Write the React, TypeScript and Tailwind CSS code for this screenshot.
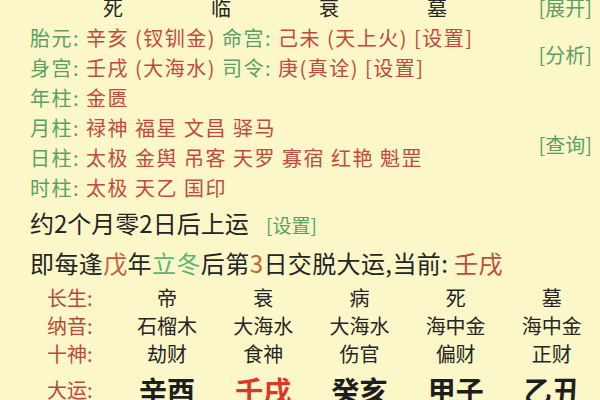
import React from 'react';

const G = 'text-[#5c9e66]';
const R = 'text-[#c04a3c]';

const infoLines: { label: string; parts: { t: string; c: string }[] }[] = [
  {
    label: '胎元:',
    parts: [
      { t: ' 辛亥 (钗钏金) ', c: R },
      { t: '命宫:', c: G },
      { t: ' 己未 (天上火) [设置]', c: R },
    ],
  },
  {
    label: '身宫:',
    parts: [
      { t: ' 壬戌 (大海水) ', c: R },
      { t: '司令:', c: G },
      { t: ' 庚(真诠) [设置]', c: R },
    ],
  },
  { label: '年柱:', parts: [{ t: ' 金匮', c: R }] },
  { label: '月柱:', parts: [{ t: ' 禄神 福星 文昌 驿马', c: R }] },
  { label: '日柱:', parts: [{ t: ' 太极 金舆 吊客 天罗 寡宿 红艳 魁罡', c: R }] },
  { label: '时柱:', parts: [{ t: ' 太极 天乙 国印', c: R }] },
];

const table = [
  { label: '长生:', values: ['帝', '衰', '病', '死', '墓'] },
  { label: '纳音:', values: ['石榴木', '大海水', '大海水', '海中金', '海中金'] },
  { label: '十神:', values: ['劫财', '食神', '伤官', '偏财', '正财'] },
];

const dayun = ['辛酉', '壬戌', '癸亥', '甲子', '乙丑'];

export default function App() {
  return (
    <div className="w-[600px] h-[400px] overflow-hidden bg-[#fbf7c8] font-['Noto_Sans_CJK_SC',sans-serif] text-[#252525]">
      {/* top part: pillars info + side links */}
      <div className="flex justify-between mt-[-7px] pl-[30px] pr-[8px]">
        <div className="flex flex-col text-[20px] leading-[30px]">
          <div className="flex items-start h-[30px]">
            <span className={`${G} text-[18px] mt-[-19px] ml-[-7px] w-[42px] whitespace-nowrap`}>[阴历]</span>
            <div className="flex ml-[-6px]">
              {['死', '临', '衰', '墓'].map((s) => (
                <span key={s} className="w-[108px] text-center">
                  {s}
                </span>
              ))}
            </div>
          </div>
          {infoLines.map((l) => (
            <div key={l.label} className="whitespace-pre tracking-[1.5px]">
              <span className={G}>{l.label}</span>
              {l.parts.map((p, i) => (
                <span key={i} className={p.c}>
                  {p.t}
                </span>
              ))}
            </div>
          ))}
        </div>
        <div className={`flex flex-col text-[20px] leading-[30px] ${G}`}>
          <span>[展开]</span>
          <span className="mt-[17px]">[分析]</span>
          <span className="mt-[60px]">[查询]</span>
        </div>
      </div>

      {/* qiyun lines */}
      <div className="pl-[30px] text-[24px]">
        <div className="leading-[40px]">
          约2个月零2日后上运 <span className={`${G} text-[19px] ml-[12px]`}>[设置]</span>
        </div>
        <div className="leading-[36px] tracking-[0.4px]">
          即每逢<span className="text-[#d0553a]">戊</span>年
          <span className="text-[#5cb574]">立冬</span>后第
          <span className="text-[#c9622e]">3</span>日交脱大运,当前: <span className={R}>壬戌</span>
        </div>
      </div>

      {/* dayun table */}
      <div className="mt-[3px] pl-[47px] text-[20px]">
        {table.map((row) => (
          <div key={row.label} className="flex h-[28px] items-center">
            <span className="w-[72px] text-[#b8483b]">{row.label}</span>
            {row.values.map((v, i) => (
              <span key={i} className="w-[96.5px] text-center">
                {v}
              </span>
            ))}
          </div>
        ))}
        <div className="flex h-[44px] items-center">
          <span className="w-[72px] text-[#b8483b]">大运:</span>
          {dayun.map((v, i) => (
            <span
              key={v}
              className={`w-[96.5px] text-center text-[28px] font-bold ${i === 1 ? 'text-[#d8392a]' : 'text-[#1e1e1e]'}`}
            >
              {v}
            </span>
          ))}
        </div>
      </div>
    </div>
  );
}
